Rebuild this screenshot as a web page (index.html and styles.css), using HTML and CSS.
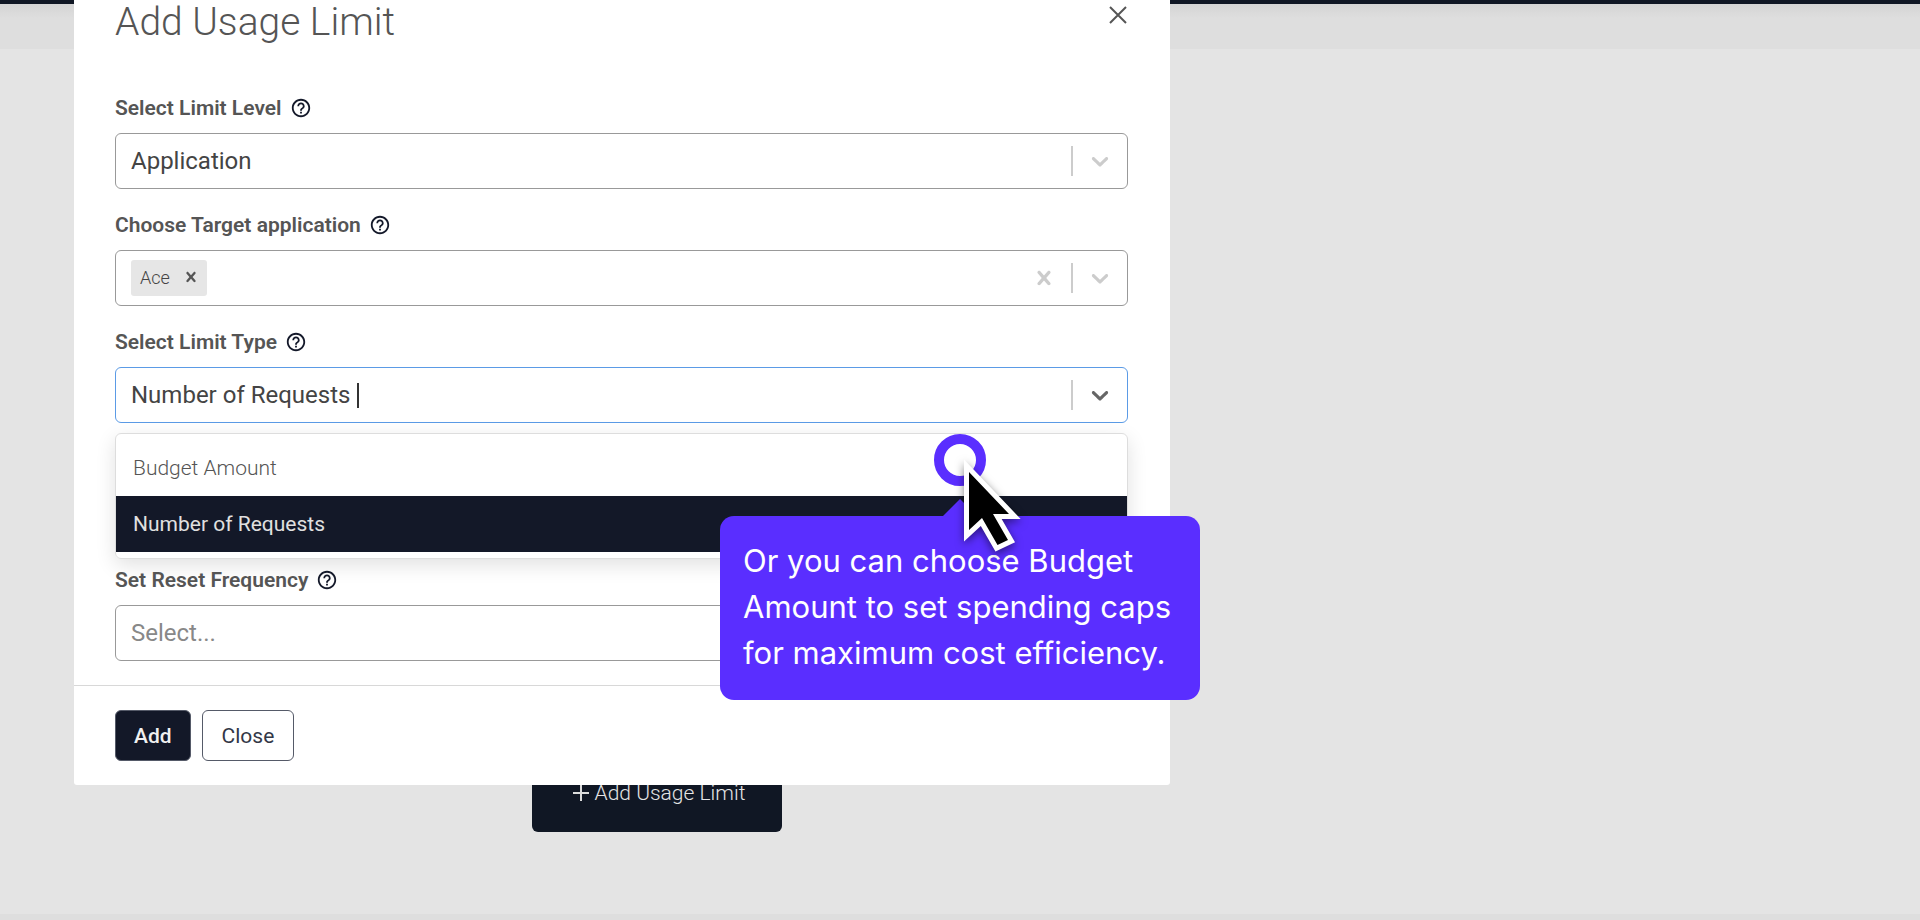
FILE: index.html
```html
<!DOCTYPE html>
<html lang="en">
	<head>
		<meta charset="utf-8">
		<title>Usage Limits</title>
		<link rel="stylesheet" href="styles.css">
	</head>
	<body>
		<!-- icons shared by the form fields -->
		<svg class="symbols" aria-hidden="true">
			<symbol id="help" viewBox="0 0 24 24">
				<path d="M11 18h2v-2h-2v2zm1-16C6.480 2 2 6.480 2 12s4.480 10 10 10 10-4.480 10-10S17.520 2 12 2zm0 18c-4.410 0-8-3.590-8-8s3.590-8 8-8 8 3.590 8 8-3.590 8-8 8zm0-14c-2.210 0-4 1.790-4 4h2c0-1.100.9-2 2-2s2 .9 2 2c0 2-3 1.750-3 5h2c0-2.250 3-2.500 3-5 0-2.210-1.790-4-4-4z"/>
			</symbol>
			<symbol id="chevron" viewBox="0 0 20 20">
				<path d="M4.516 7.548c0.436-0.446 1.043-0.481 1.576 0l3.908 3.747 3.908-3.747c0.533-0.481 1.141-0.446 1.574 0 0.436 0.445 0.408 1.197 0 1.615-0.406 0.418-4.695 4.502-4.695 4.502-0.217 0.223-0.502 0.335-0.787 0.335s-0.570-0.112-0.789-0.335c0 0-4.287-4.084-4.695-4.502s-0.436-1.170 0-1.615z"/>
			</symbol>
			<symbol id="cross" viewBox="0 0 20 20">
				<path d="M14.348 14.849c-0.469 0.469-1.229 0.469-1.697 0l-2.651-3.030-2.651 3.029c-0.469 0.469-1.229 0.469-1.697 0-0.469-0.469-0.469-1.229 0-1.697l2.758-3.150-2.759-3.152c-0.469-0.469-0.469-1.228 0-1.697s1.228-0.469 1.697 0l2.652 3.031 2.651-3.031c0.469-0.469 1.228-0.469 1.697 0s0.469 1.229 0 1.697l-2.758 3.152 2.758 3.150c0.469 0.469 0.469 1.229 0 1.698z"/>
			</symbol>
		</svg>

		<div class="page">
			<div class="topbar"></div>
			<div class="subbar"></div>
			<main class="content">
				<button class="add-limit" type="button">
					<svg class="plus" viewBox="0 0 16 16"><path d="M8 0v16M0 8h16"/></svg>
					Add Usage Limit
				</button>
			</main>
			<div class="bottombar"></div>
		</div>

		<div class="modal" role="dialog" aria-labelledby="modal-title">
			<div class="modal-header">
				<h1 id="modal-title">Add Usage Limit</h1>
				<button class="modal-close" type="button" aria-label="Close dialog">
					<svg viewBox="0 0 18 18"><path d="M1 1l16 16M17 1L1 17"/></svg>
				</button>
			</div>

			<form class="modal-body">
				<div class="field">
					<div class="label-row">
						<label for="level">Select Limit Level</label>
						<svg class="help"><use href="#help"/></svg>
					</div>
					<div class="control">
						<select id="level">
							<option selected>Application</option>
						</select>
						<span class="separator"></span>
						<svg class="arrow"><use href="#chevron"/></svg>
					</div>
				</div>

				<div class="field">
					<div class="label-row">
						<label for="target">Choose Target application</label>
						<svg class="help"><use href="#help"/></svg>
					</div>
					<div class="control">
						<span class="tag">
							Ace
							<button type="button" aria-label="Remove Ace"><svg><use href="#cross"/></svg></button>
						</span>
						<input id="target" type="text">
						<button class="clear" type="button" aria-label="Clear all"><svg><use href="#cross"/></svg></button>
						<span class="separator"></span>
						<svg class="arrow"><use href="#chevron"/></svg>
					</div>
				</div>

				<div class="field open">
					<div class="label-row">
						<label for="type">Select Limit Type</label>
						<svg class="help"><use href="#help"/></svg>
					</div>
					<div class="control">
						<span class="value">Number of Requests</span>
						<input id="type" type="text" role="combobox" aria-expanded="true" aria-controls="type-menu">
						<span class="separator"></span>
						<svg class="arrow"><use href="#chevron"/></svg>
					</div>
					<div class="menu" id="type-menu" role="listbox">
						<div class="option" role="option">Budget Amount</div>
						<div class="option selected" role="option" aria-selected="true">Number of Requests</div>
					</div>
				</div>

				<div class="field">
					<div class="label-row">
						<label for="reset">Set Reset Frequency</label>
						<svg class="help"><use href="#help"/></svg>
					</div>
					<div class="control">
						<select id="reset" class="placeholder">
							<option selected>Select...</option>
						</select>
						<span class="separator"></span>
						<svg class="arrow"><use href="#chevron"/></svg>
					</div>
				</div>
			</form>

			<div class="modal-footer">
				<button class="btn primary" type="button">Add</button>
				<button class="btn" type="button">Close</button>
			</div>
		</div>

		<!-- guided tour step -->
		<div class="tour" role="tooltip">
			Or you can choose Budget Amount to set spending caps for maximum cost efficiency.
			<span class="tour-ring"></span>
			<svg class="tour-cursor" viewBox="0 0 80 110">
				<path d="M19 22L59 64H43l15 26-10.500 5L32 68 19 80z"/>
			</svg>
		</div>
	</body>
</html>
```

FILE: styles.css
```css
* {
	box-sizing: border-box;
}
body {
	margin: 0;
	font-family: Roboto, "Liberation Sans", sans-serif;
	font-size: 21px;
	color: #555;
	background-color: #e4e4e4;
	overflow: hidden;
}
button, input, select {
	font-family: inherit;
	font-size: inherit;
	cursor: pointer;
}
.symbols {
	display: none;
}

/* page behind the dialog */
.page {
	display: flex;
	flex-direction: column;
	height: 100vh;
}
.topbar {
	height: 4px;
	background-color: #101724;
}
.subbar {
	height: 45px;
	background: linear-gradient(#d4d4d4, #dedede 14px);
}
.bottombar {
	height: 6px;
	background-color: #dedede;
}
.content {
	flex: 1;
	display: flex;
	align-items: flex-end;
	padding: 0 0 82px 532px;
}
.add-limit {
	display: flex;
	align-items: center;
	justify-content: center;
	gap: 6px;
	width: 250px;
	height: 78px;
	padding: 0 6px 0 10px;
	border: none;
	border-radius: 6px;
	background-color: #101724;
	color: #e4e4e4;
	font-weight: 300;
}
.plus {
	width: 16px;
	height: 16px;
	stroke: #dcdcdc;
	stroke-width: 2;
}

/* dialog */
.modal {
	position: absolute;
	top: 0;
	left: 74px;
	right: 750px;
	background-color: #fff;
	border-radius: 0 0 3px 3px;
}
.modal-header {
	display: flex;
	justify-content: space-between;
	align-items: flex-start;
	padding: 0 43px 0 41px;
}
h1 {
	margin: 0;
	font-size: 39px;
	line-height: 44px;
	font-weight: 300;
}
.modal-close {
	display: flex;
	margin-top: 6px;
	padding: 0;
	border: none;
	background: none;
}
.modal-close svg {
	width: 18px;
	height: 18px;
	stroke: #555;
	stroke-width: 2;
}
.modal-body {
	padding: 52px 42px 24px 41px;
}
.field {
	margin-bottom: 24px;
}
.field:last-child {
	margin-bottom: 0;
}
.field.open {
	margin-bottom: 9px;
}
.label-row {
	display: flex;
	align-items: center;
	gap: 8px;
	margin-bottom: 13px;
	line-height: 24px;
	font-weight: 600;
}
.help {
	width: 22px;
	height: 22px;
	fill: #14192a;
}

.control {
	display: flex;
	align-items: center;
	height: 56px;
	padding: 0 13px 0 15px;
	border: 1px solid #999;
	border-radius: 6px;
	font-size: 24px;
	color: #444;
}
.control select, .control input {
	flex: 1;
	min-width: 0;
	padding: 0;
	border: none;
	outline: none;
	appearance: none;
	background: none;
	color: inherit;
}
.control select.placeholder {
	color: #888;
}
.separator {
	width: 2px;
	height: 30px;
	background-color: #ccc;
}
.arrow {
	width: 28px;
	height: 28px;
	margin-left: 13px;
	fill: #ccc;
}
.clear {
	display: flex;
	margin-right: 13px;
	padding: 0;
	border: none;
	background: none;
}
.clear svg {
	width: 28px;
	height: 28px;
	fill: #ccc;
}
.tag {
	display: flex;
	align-items: center;
	gap: 11px;
	height: 36px;
	padding: 0 6px 2px 9px;
	border-radius: 3px;
	background-color: #e6e6e6;
	font-size: 18px;
	font-weight: 300;
}
.tag button {
	display: flex;
	padding: 0;
	border: none;
	background: none;
}
.tag svg {
	width: 20px;
	height: 20px;
	fill: #555;
}

.open .control {
	border-color: #5b9be6;
}
.open .control input {
	height: 25px;
	margin-left: 7px;
	border-left: 2px solid #333;
	caret-color: transparent;
}
.open .arrow {
	fill: #666;
}
.menu {
	margin-top: 10px;
	padding: 6px 0;
	border: 1px solid #ddd;
	border-radius: 6px;
	box-shadow: 0 6px 20px rgba(0,0,0,0.12);
}
.option {
	padding: 0 17px;
	line-height: 56px;
	font-weight: 300;
}
.option.selected {
	background-color: #131828;
	color: #e0e0e0;
	font-weight: 400;
}

.modal-footer {
	display: flex;
	gap: 11px;
	padding: 24px 41px;
	border-top: 1px solid #d8d8d8;
}
.btn {
	height: 51px;
	padding: 0 19px;
	border: 1px solid #555a68;
	border-radius: 6px;
	background-color: #fff;
	color: #333847;
}
.btn.primary {
	padding: 0 18px;
	background-color: #131828;
	color: #f0f0f0;
	font-weight: 500;
}

/* tour bubble, lies over the dialog */
.tour {
	position: absolute;
	top: 516px;
	left: 720px;
	width: 480px;
	padding: 22px 23px 24px;
	border-radius: 14px;
	background-color: #5a2eff;
	color: #fff;
	font-family: Inter, "Liberation Sans", sans-serif;
	font-size: 31px;
	line-height: 46px;
}
.tour::before {
	content: "";
	position: absolute;
	top: -17px;
	left: 223px;
	border: 17px solid transparent;
	border-top: none;
	border-bottom-color: #5a2eff;
}
.tour-ring {
	position: absolute;
	top: -82px;
	left: 214px;
	width: 52px;
	height: 52px;
	border: 10px solid #5a2eff;
	border-radius: 50%;
	background-color: rgba(255,255,255,0.9);
}
.tour-cursor {
	position: absolute;
	top: -66px;
	left: 230px;
	width: 80px;
	height: 110px;
	fill: #000;
	stroke: #fff;
	stroke-width: 10;
	stroke-miterlimit: 8;
	paint-order: stroke;
	filter: drop-shadow(0 3px 4px rgba(0,0,0,0.5));
}
```
